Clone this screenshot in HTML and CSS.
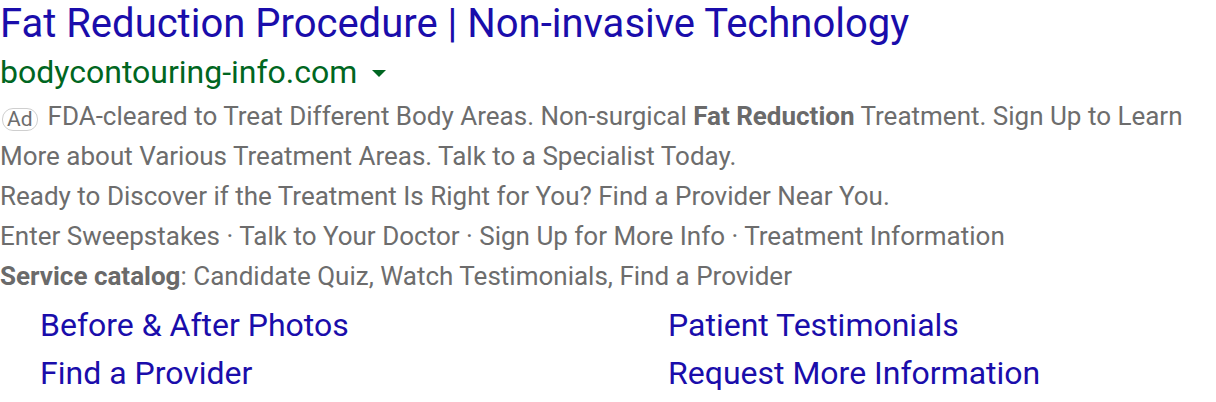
FILE: index.html
```html
<!DOCTYPE html>
<html>
<head>
<meta charset="utf-8">
<link rel="stylesheet" href="styles.css">
</head>
<body>
<div class="ad">
  <a class="title" href="#">Fat Reduction Procedure | Non-invasive Technology</a>
  <div class="url">
    <span>bodycontouring-info.com</span>
    <svg class="caret" width="14" height="8" viewBox="0 0 14 8"><path d="M0 0H14L7 7Z" fill="#006621"/></svg>
  </div>
  <div class="desc">
    <p><span class="badge">Ad</span>FDA-cleared to Treat Different Body Areas. Non-surgical <b>Fat Reduction</b> Treatment. Sign Up to Learn More about Various Treatment Areas. Talk to a Specialist Today.</p>
    <p>Ready to Discover if the Treatment Is Right for You? Find a Provider Near You.</p>
    <p>Enter Sweepstakes · Talk to Your Doctor · Sign Up for More Info · Treatment Information</p>
    <p><b>Service catalog</b>: Candidate Quiz, Watch Testimonials, Find a Provider</p>
  </div>
  <div class="sitelinks">
    <a href="#">Before &amp; After Photos</a>
    <a href="#">Patient Testimonials</a>
    <a href="#">Find a Provider</a>
    <a href="#">Request More Information</a>
  </div>
</div>
</body>
</html>
```
FILE: styles.css
```css
body {
  margin: 0;
  background: #fff;
  font-family: Roboto, "Liberation Sans", sans-serif;
}
.ad {
  width: 1200px;
}
.title {
  display: block;
  color: #1a0dab;
  font-size: 40px;
  line-height: 48px;
  text-decoration: none;
}
.url {
  display: flex;
  align-items: center;
  gap: 15px;
  color: #006621;
  font-size: 32px;
  line-height: 48px;
}
.caret {
  margin-top: 4px;
}
.desc {
  color: #6d6d6d;
  font-size: 26px;
  line-height: 40px;
}
.desc p {
  margin: 0;
}
.desc b {
  color: #6a6a6a;
}
.badge {
  display: inline-block;
  box-sizing: border-box;
  height: 23px;
  border: 1px solid #cfcfcf;
  border-radius: 11px;
  font-size: 21px;
  line-height: 21px;
  padding: 0 4px;
  margin: 0 10px 0 2px;
  color: #6d6d6d;
  vertical-align: -1px;
}
.sitelinks {
  display: grid;
  grid-template-columns: 628px 1fr;
  padding-left: 40px;
  padding-top: 5px;
}
.sitelinks a {
  color: #1a0dab;
  font-size: 32px;
  line-height: 48px;
  text-decoration: none;
}
```
